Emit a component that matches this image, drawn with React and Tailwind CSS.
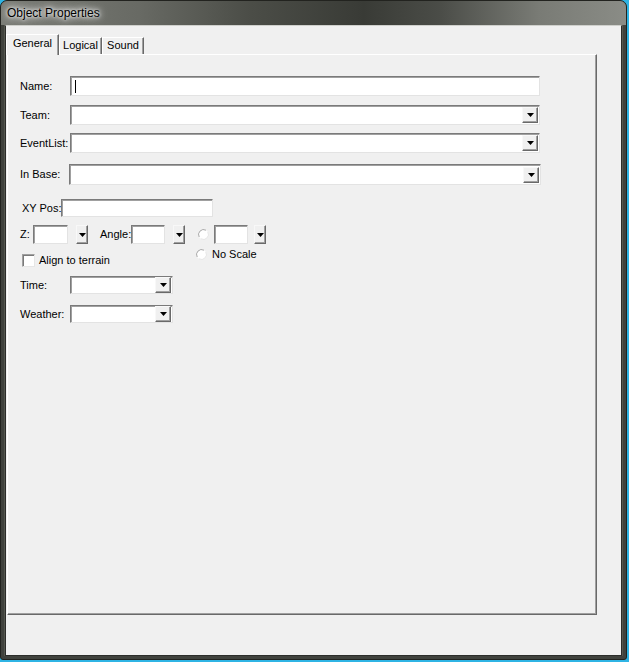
import React from "react";

const sunken =
  "bg-white border border-t-[#7a7a7a] border-l-[#7a7a7a] border-r-[#e3e3e3] border-b-[#e3e3e3] shadow-[inset_1px_1px_0_#a0a0a0]";

const Arrow = () => (
  <svg width="7" height="4" viewBox="0 0 7 4">
    <path d="M0 0h7L3.5 4z" fill="#000" />
  </svg>
);

const DropButton = ({ className = "" }) => (
  <div
    className={`shrink-0 flex items-center justify-center bg-[#f0f0f0] border border-t-[#f8f8f8] border-l-[#f8f8f8] border-r-[#696969] border-b-[#696969] shadow-[inset_-1px_-1px_0_#a0a0a0] ${className}`}
  >
    <Arrow />
  </div>
);

const Combo = ({ className = "" }) => (
  <div className={`${sunken} shrink-0 flex justify-end items-center pr-[1px] ${className}`}>
    <DropButton className="w-[16px] h-[16px]" />
  </div>
);

const Radio = () => (
  <svg width="11" height="11" viewBox="0 0 11 11" className="shrink-0">
    <circle cx="5.5" cy="5.5" r="5" fill="#fff" />
    <path d="M1.2 8A5 5 0 0 1 8 1.2" stroke="#a8a8a8" strokeWidth="1" fill="none" />
    <path d="M9.8 3A5 5 0 0 1 3 9.8" stroke="#e6e6e6" strokeWidth="1" fill="none" />
  </svg>
);

const Checkbox = () => (
  <div className="shrink-0 w-[13px] h-[13px] bg-white border border-t-[#a0a0a0] border-l-[#a0a0a0] border-r-[#e6e6e6] border-b-[#e6e6e6] shadow-[inset_1px_1px_0_#7a7a7a]" />
);

const Tab = ({ label, active, width }) => (
  <div
    className={`flex justify-center border-t border-l border-t-white border-l-white border-r border-r-[#696969] shadow-[inset_-1px_0_0_#a0a0a0] bg-[#f0f0f0] ${width} ${
      active
        ? "relative z-10 -ml-[1px] h-[21px] -mb-[1px] pt-[3px]"
        : "h-[17px] pt-[2px]"
    }`}
  >
    <span className="whitespace-nowrap">{label}</span>
  </div>
);

export default function App() {
  return (
    <div className="w-[629px] h-[662px] bg-[#2fb4e4] font-['Liberation_Sans',Arial,sans-serif] text-[11px] text-black leading-none whitespace-nowrap">
      <div className="w-[627px] h-[660px] flex flex-col rounded-t-[7px] rounded-b-[3px] border border-[#22231f] bg-[#40423d] overflow-hidden">
        {/* title bar */}
        <div className="h-[24px] shrink-0 flex items-center pl-[6px] bg-[linear-gradient(90deg,#7b7d77_0%,#686a64_22%,#4b4d47_40%,#393b36_58%,#4a4c47_70%,#797b75_86%,#8a8c86_100%)]">
          <span className="text-[12px] pb-[1px] [text-shadow:0_0_6px_#fff,0_0_10px_#fff,0_0_3px_#eee]">
            Object Properties
          </span>
        </div>

        <div className="flex-1 flex px-[3px] pb-[3px]">
          <div className="w-[1px] bg-[#55574f]" />
          {/* client */}
          <div className="flex-1 flex flex-col bg-[#f0f0f0] border border-[#2c2d2a] border-t-[#cfd0cc]">
            <div className="mt-[8px] ml-[1px] flex items-end h-[20px]">
              <Tab label="General" active width="w-[53px]" />
              <Tab label="Logical" width="w-[43px]" />
              <Tab label="Sound" width="w-[42px]" />
            </div>

            {/* tab page */}
            <div className="ml-[1px] w-[590px] h-[561px] border border-t-white border-l-white border-r-[#696969] border-b-[#696969] shadow-[inset_-1px_-1px_0_#a0a0a0] pt-[21px] pl-[12px] flex flex-col">
              <div className="flex items-center h-[20px]">
                <span className="w-[50px] shrink-0">Name:</span>
                <div className={`${sunken} shrink-0 w-[470px] h-[20px] flex items-center pl-[4px]`}>
                  <div className="w-[1px] h-[13px] bg-black" />
                </div>
              </div>

              <div className="flex items-center mt-[9px]">
                <span className="w-[50px] shrink-0">Team:</span>
                <Combo className="w-[470px] h-[20px]" />
              </div>

              <div className="flex items-center mt-[8px]">
                <span className="w-[50px] shrink-0">EventList:</span>
                <Combo className="w-[470px] h-[20px]" />
              </div>

              <div className="flex items-center mt-[11px]">
                <span className="w-[49px] shrink-0">In Base:</span>
                <Combo className="w-[472px] h-[21px]" />
              </div>

              <div className="flex items-center mt-[14px] pl-[2px]">
                <span className="w-[39px] shrink-0">XY Pos:</span>
                <div className={`${sunken} shrink-0 w-[152px] h-[18px]`} />
              </div>

              <div className="flex items-center mt-[8px] h-[19px]">
                <span className="w-[13px] shrink-0">Z:</span>
                <div className={`${sunken} shrink-0 w-[35px] h-[19px]`} />
                <DropButton className="ml-[8px] w-[12px] h-[19px]" />
                <span className="ml-[12px] w-[31px] shrink-0">Angle:</span>
                <div className={`${sunken} shrink-0 w-[34px] h-[19px]`} />
                <DropButton className="ml-[8px] w-[12px] h-[19px]" />
                <div className="ml-[13px]">
                  <Radio />
                </div>
                <div className={`${sunken} shrink-0 ml-[5px] w-[34px] h-[19px]`} />
                <DropButton className="ml-[6px] w-[12px] h-[19px]" />
              </div>

              <div className="flex items-start mt-[5px]">
                <div className="flex items-center ml-[2px] mt-[5px] w-[174px]">
                  <Checkbox />
                  <span className="ml-[4px]">Align to terrain</span>
                </div>
                <div className="flex items-center">
                  <Radio />
                  <span className="ml-[5px]">No Scale</span>
                </div>
              </div>

              <div className="flex items-center mt-[9px]">
                <span className="w-[50px] shrink-0">Time:</span>
                <Combo className="w-[103px] h-[18px]" />
              </div>

              <div className="flex items-center mt-[11px]">
                <span className="w-[50px] shrink-0">Weather:</span>
                <Combo className="w-[103px] h-[18px]" />
              </div>
            </div>
          </div>
          <div className="w-[1px] bg-[#55574f]" />
        </div>
      </div>
    </div>
  );
}
